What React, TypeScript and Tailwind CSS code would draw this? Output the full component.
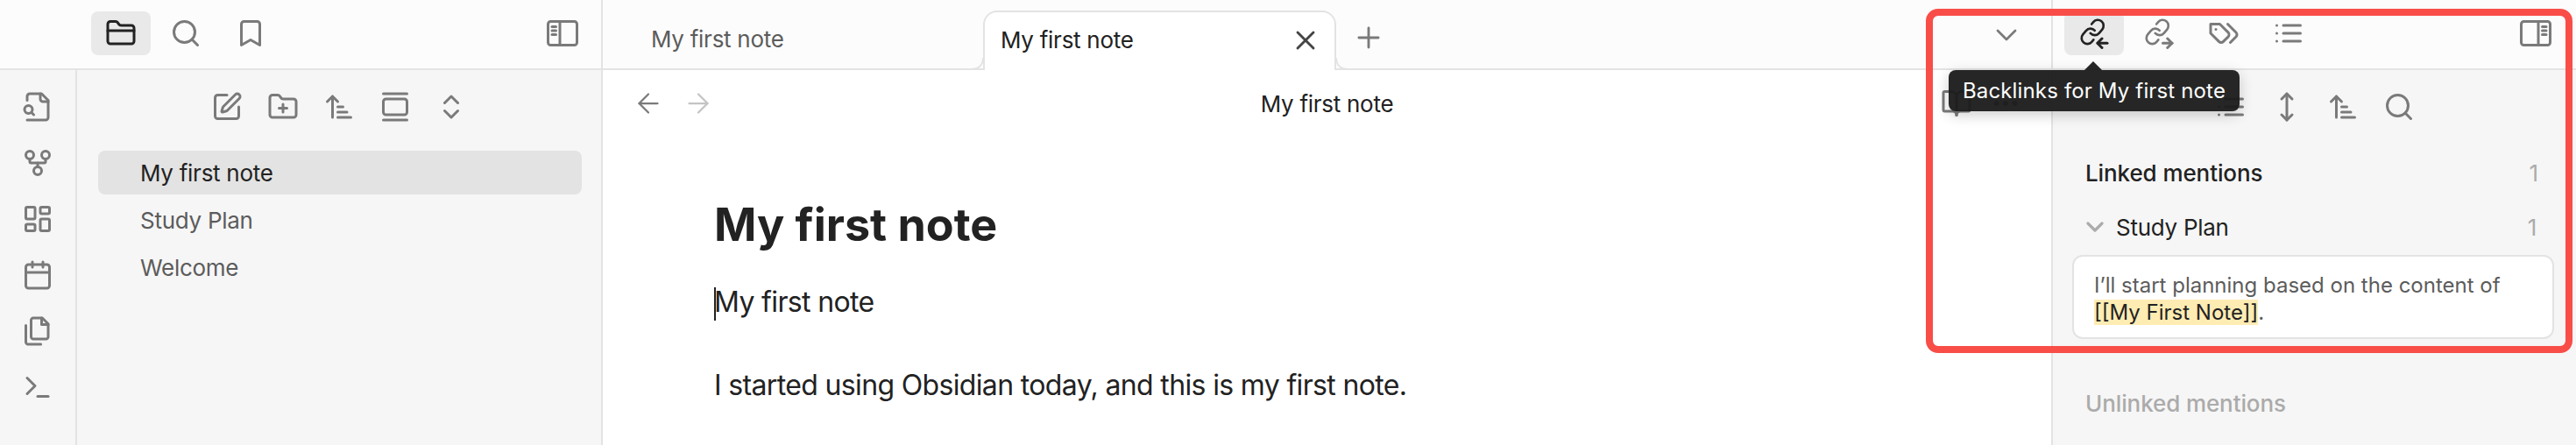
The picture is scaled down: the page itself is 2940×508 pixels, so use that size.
import React from "react";

type IcoProps = { className?: string; sw?: number; size?: string; children: React.ReactNode };
function Ico({ className = "text-[#7a7a7a]", sw = 2, size = "w-[36px] h-[36px]", children }: IcoProps) {
  return (
    <svg viewBox="0 0 24 24" fill="none" stroke="currentColor" strokeWidth={sw} strokeLinecap="round" strokeLinejoin="round" className={`${size} shrink-0 ${className}`}>
      {children}
    </svg>
  );
}

const FolderI = () => (<><path d="M20 20a2 2 0 0 0 2-2V8a2 2 0 0 0-2-2h-7.9a2 2 0 0 1-1.69-.9L9.6 3.9A2 2 0 0 0 7.93 3H4a2 2 0 0 0-2 2v13a2 2 0 0 0 2 2Z" /><path d="M2 10h20" /></>);
const SearchI = () => (<><circle cx="11" cy="11" r="8" /><path d="m21 21-4.3-4.3" /></>);
const BookmarkI = () => <path d="m19 21-7-4-7 4V5a2 2 0 0 1 2-2h10a2 2 0 0 1 2 2v16z" />;
const SideLeftI = () => (<><path d="M21 3H3C1.9 3 1 3.9 1 5V19C1 20.1 1.9 21 3 21H21C22.1 21 23 20.1 23 19V5C23 3.9 22.1 3 21 3Z" /><path d="M10 4V20" /><path d="M4 7H7" /><path d="M4 10H7" /><path d="M4 13H7" /></>);
const SideRightI = () => (<><path d="M3 3H21C22.1 3 23 3.9 23 5V19C23 20.1 22.1 21 21 21H3C1.9 21 1 20.1 1 19V5C1 3.9 1.9 3 3 3Z" /><path d="M14 4V20" /><path d="M17 7H20" /><path d="M17 10H20" /><path d="M17 13H20" /></>);
const SwitcherI = () => (<><path d="M4 22h14a2 2 0 0 0 2-2V7l-5-5H6a2 2 0 0 0-2 2v3" /><path d="M14 2v4a2 2 0 0 0 2 2h4" /><path d="M5 17a3 3 0 1 0 0-6 3 3 0 0 0 0 6z" /><path d="m9 18-1.5-1.5" /></>);
const GraphI = () => (<><circle cx="12" cy="18" r="3" /><circle cx="6" cy="6" r="3" /><circle cx="18" cy="6" r="3" /><path d="M18 9v2c0 .6-.4 1-1 1H7c-.6 0-1-.4-1-1V9" /><path d="M12 12v3" /></>);
const CanvasI = () => (<><rect x="3" y="3" width="7" height="9" rx="1" /><rect x="14" y="3" width="7" height="5" rx="1" /><rect x="14" y="12" width="7" height="9" rx="1" /><rect x="3" y="16" width="7" height="5" rx="1" /></>);
const CalendarI = () => (<><path d="M8 2v4" /><path d="M16 2v4" /><rect x="3" y="4" width="18" height="18" rx="2" /><path d="M3 10h18" /></>);
const FilesI = () => (<><path d="M15.5 2H8.6c-.4 0-.8.2-1.1.5-.3.3-.5.7-.5 1.1v12.8c0 .4.2.8.5 1.1.3.3.7.5 1.1.5h9.8c.4 0 .8-.2 1.1-.5.3-.3.5-.7.5-1.1V6.5L15.5 2z" /><path d="M3 7.6v12.8c0 .4.2.8.5 1.1.3.3.7.5 1.1.5h9.8" /><path d="M15 2v5h5" /></>);
const TerminalI = () => (<><path d="m4 17 6-6-6-6" /><path d="M12 19h8" /></>);
const PenI = () => (<><path d="M12 3H5a2 2 0 0 0-2 2v14a2 2 0 0 0 2 2h14a2 2 0 0 0 2-2v-7" /><path d="M18.375 2.625a1 1 0 0 1 3 3l-9.013 9.014a2 2 0 0 1-.853.505l-2.873.84a.5.5 0 0 1-.62-.62l.84-2.873a2 2 0 0 1 .506-.852z" /></>);
const FolderPlusI = () => (<><path d="M12 10v6" /><path d="M9 13h6" /><path d="M20 20a2 2 0 0 0 2-2V8a2 2 0 0 0-2-2h-7.9a2 2 0 0 1-1.69-.9L9.6 3.9A2 2 0 0 0 7.93 3H4a2 2 0 0 0-2 2v13a2 2 0 0 0 2 2Z" /></>);
const SortI = () => (<><path d="m3 8 4-4 4 4" /><path d="M7 4v16" /><path d="M11 12h4" /><path d="M11 16h7" /><path d="M11 20h10" /></>);
const GalleryI = () => (<><path d="M3 2h18" /><rect width="18" height="12" x="3" y="6" rx="2" /><path d="M3 22h18" /></>);
const ChevUpDownI = () => (<><path d="m7 15 5 5 5-5" /><path d="m7 9 5-5 5 5" /></>);
const ChainI = () => (<g transform="rotate(-5 10.8 11.3) translate(0.3 0.4) scale(0.88)"><path d="M10 13a5 5 0 0 0 7.54.54l3-3a5 5 0 0 0-7.07-7.07l-1.72 1.71" /><path d="M14 11a5 5 0 0 0-7.54-.54l-3 3a5 5 0 0 0 7.07 7.07l1.71-1.71" /></g>);
const TagsI = () => (<><path d="M9 5H2v7l6.29 6.29c.94.94 2.48.94 3.42 0l3.58-3.58c.94-.94.94-2.48 0-3.42L9 5Z" /><path d="M6 9.01V9" /><path d="m15 5 6.3 6.3a2.4 2.4 0 0 1 0 3.4L17 19" /></>);
const ListI = () => (<><path d="M8 6h13" /><path d="M8 12h13" /><path d="M8 18h13" /><path d="M3 6h.01" /><path d="M3 12h.01" /><path d="M3 18h.01" /></>);

function Btn({ active, children }: { active?: boolean; children: React.ReactNode }) {
  return (
    <div className={`w-[68px] h-[50px] flex items-center justify-center rounded-[8px] ${active ? "bg-[#e9e9e9]" : ""}`}>
      {children}
    </div>
  );
}

export default function App() {
  const ribbon = [SwitcherI, GraphI, CanvasI, CalendarI, FilesI, TerminalI];
  return (
    <div className="relative w-[2940px] h-[508px] overflow-hidden flex bg-white text-[#222222] font-[Inter,sans-serif]">
      {/* Left column */}
      <div className="w-[688px] shrink-0 flex flex-col border-r-2 border-[#e3e3e3]">
        <div className="h-[80px] shrink-0 border-b-2 border-[#e3e3e3] bg-[#fcfcfc] flex items-center pl-[104px] pr-[26px] pb-[2px]">
          <div className="flex gap-[6px]">
            <Btn active><Ico className="text-[#222222]"><FolderI /></Ico></Btn>
            <Btn><Ico><SearchI /></Ico></Btn>
            <Btn><Ico><BookmarkI /></Ico></Btn>
          </div>
          <div className="ml-auto"><Ico><SideLeftI /></Ico></div>
        </div>
        <div className="flex-1 flex min-h-0 bg-[#f6f6f6]">
          <div className="w-[88px] shrink-0 border-r-2 border-[#e3e3e3] flex flex-col items-center pt-[24px] gap-[28px]">
            {ribbon.map((I, i) => (
              <Ico key={i}><I /></Ico>
            ))}
          </div>
          <div className="flex-1 flex flex-col min-w-0">
            <div className="pt-[24px] h-[92px] shrink-0 flex justify-center gap-[28px]">
              <Ico><PenI /></Ico>
              <Ico><FolderPlusI /></Ico>
              <Ico><SortI /></Ico>
              <Ico><GalleryI /></Ico>
              <Ico><ChevUpDownI /></Ico>
            </div>
            <div className="pl-[24px] pr-[22px] flex flex-col gap-[4px] text-[26px] tracking-[-0.27px] text-[#5c5c5c]">
              <div className="h-[50px] rounded-[8px] bg-[#e3e3e3] pl-[48px] flex items-center text-[#222222]">My first note</div>
              <div className="h-[50px] pl-[48px] flex items-center">Study Plan</div>
              <div className="h-[50px] pl-[48px] flex items-center">Welcome</div>
            </div>
          </div>
        </div>
      </div>

      {/* Center column */}
      <div className="flex-1 min-w-0 flex flex-col">
        <div className="h-[80px] shrink-0 border-b-2 border-[#e3e3e3] bg-[#fcfcfc] flex text-[26px] tracking-[-0.27px]">
          <div className="w-[434px] shrink-0 pl-[55px] flex items-center pt-[10px] text-[#5c5c5c]">My first note</div>
          <div className="relative w-[403px] h-[68px] mt-[12px] shrink-0 bg-white border-2 border-b-0 border-[#e3e3e3] rounded-t-[16px] pl-[18px] pr-[15px] pb-[3px] flex items-center justify-between">
            <span>My first note</span>
            <Ico className="text-[#444444]" sw={1.9}><path d="M18 6 6 18" /><path d="m6 6 12 12" /></Ico>
            <svg viewBox="0 0 14 14" className="absolute bottom-0 left-[-16px] w-[14px] h-[14px]" fill="none"><path d="M14 0 C14 8 9 13 0 13" stroke="#e3e3e3" strokeWidth="2" /></svg>
            <svg viewBox="0 0 14 14" className="absolute bottom-0 right-[-16px] w-[14px] h-[14px]" fill="none"><path d="M0 0 C0 8 5 13 14 13" stroke="#e3e3e3" strokeWidth="2" /></svg>
          </div>
          <div className="ml-[18px] flex items-center pt-[8px]">
            <Ico sw={1.8} size="w-[38px] h-[38px]"><path d="M5 12h14" /><path d="M12 5v14" /></Ico>
          </div>
          <div className="ml-auto mr-[31px] flex items-center pt-[2px]">
            <Ico sw={1.6} size="w-[40px] h-[40px]"><path d="m6 9 6 6 6-6" /></Ico>
          </div>
        </div>
        <div className="h-[74px] shrink-0 grid grid-cols-[1fr_auto_1fr] items-center px-[34px] pt-[2px] text-[26px] tracking-[-0.27px]">
          <div className="flex gap-[21px]">
            <Ico sw={1.5}><path d="m12 19-7-7 7-7" /><path d="M19 12H5" /></Ico>
            <Ico sw={1.5} className="text-[#c4c4c4]"><path d="m12 5 7 7-7 7" /><path d="M5 12h14" /></Ico>
          </div>
          <div>My first note</div>
          <div className="flex gap-[20px] justify-end">
            <Ico><path d="M12 7v14" /><path d="M3 18a1 1 0 0 1-1-1V4a1 1 0 0 1 1-1h5a4 4 0 0 1 4 4 4 4 0 0 1 4-4h5a1 1 0 0 1 1 1v13a1 1 0 0 1-1 1h-6a3 3 0 0 0-3 3 3 3 0 0 0-3-3z" /></Ico>
            <Ico><circle cx="12" cy="12" r="1" /><circle cx="19" cy="12" r="1" /><circle cx="5" cy="12" r="1" /></Ico>
          </div>
        </div>
        <div className="pl-[127px] pt-[72px]">
          <h1 className="text-[52px] leading-[62px] font-bold">My first note</h1>
          <p className="mt-[33px] text-[32px] leading-[48px] tracking-[-0.65px]">
            <span className="inline-block w-[2px] h-[38px] bg-[#222222] align-middle -mr-[2px]" />My first note
          </p>
          <p className="mt-[47px] text-[32px] leading-[48px] tracking-[-0.65px]">I started using Obsidian today, and this is my first note.</p>
        </div>
      </div>

      {/* Right column */}
      <div className="w-[599px] shrink-0 flex flex-col border-l-2 border-[#e3e3e3]">
        <div className="h-[80px] shrink-0 border-b-2 border-[#e3e3e3] bg-[#fcfcfc] flex items-center pl-[13px] pr-[28px] pb-[2px]">
          <div className="flex gap-[6px]">
            <Btn active>
              <Ico className="text-[#222222]"><ChainI /><path d="M22 19.5h-7" /><path d="m18 16-3.5 3.5L18 23" /></Ico>
            </Btn>
            <Btn>
              <Ico><ChainI /><path d="M15 19.5h7" /><path d="m18.5 16 3.5 3.5-3.5 3.5" /></Ico>
            </Btn>
            <Btn><Ico><TagsI /></Ico></Btn>
            <Btn><Ico><ListI /></Ico></Btn>
          </div>
          <div className="ml-auto"><Ico><SideRightI /></Ico></div>
        </div>
        <div className="flex-1 min-h-0 bg-[#f6f6f6] flex flex-col">
          <div className="pt-[24px] h-[92px] shrink-0 flex justify-center gap-[28px]">
            <Ico><ListI /></Ico>
            <Ico><path d="M12 2v20" /><path d="m8 18 4 4 4-4" /><path d="m8 6 4-4 4 4" /></Ico>
            <Ico><SortI /></Ico>
            <Ico><SearchI /></Ico>
          </div>
          <div className="h-[50px] shrink-0 flex items-center justify-between pl-[37px] pr-[43px] text-[26px] tracking-[-0.1px] font-medium">
            <span>Linked mentions</span>
            <span className="text-[#ababab] font-normal">1</span>
          </div>
          <div className="mt-[12px] h-[50px] shrink-0 flex items-center pl-[37px] pr-[45px] text-[26px] tracking-[-0.27px]">
            <Ico className="text-[#ababab] -ml-[5px] mr-[8px]" sw={2.4} size="w-[32px] h-[32px]"><path d="m6 9 6 6 6-6" /></Ico>
            <span>Study Plan</span>
            <span className="ml-auto text-[#ababab]">1</span>
          </div>
          <div className="mt-[7px] ml-[22px] mr-[25px] h-[96px] shrink-0 bg-white border-2 border-[#e3e3e3] rounded-[12px] pl-[23px] pt-[17px] text-[24px] leading-[31px] text-[#5c5c5c]">
            <div>I’ll start planning based on the content of</div>
            <div><span className="bg-[#ffecb3] text-[#222222]">[[My First Note]]</span>.</div>
          </div>
          <div className="mt-[54px] pl-[37px] text-[26px] tracking-[-0.1px] font-medium text-[#ababab]">Unlinked mentions</div>
        </div>
      </div>

      {/* Tooltip */}
      <div className="absolute left-[2224px] top-[80px] w-[332px] h-[47px] rounded-[8px] bg-[#1a1a1a]/95 shadow-[0_4px_16px_rgba(0,0,0,0.2)] flex items-center justify-center text-white text-[24px] tracking-[0.15px] whitespace-nowrap">
        <div className="absolute left-[155px] top-[-10px] w-0 h-0 border-l-[10px] border-r-[10px] border-b-[10px] border-l-transparent border-r-transparent border-b-[#1a1a1a]/95" />
        Backlinks for My first note
      </div>

      {/* Red annotation frame */}
      <div className="absolute left-[2198px] top-[10px] w-[738px] h-[393px] border-8 border-[#f94d48] rounded-[14px]" />
    </div>
  );
}
